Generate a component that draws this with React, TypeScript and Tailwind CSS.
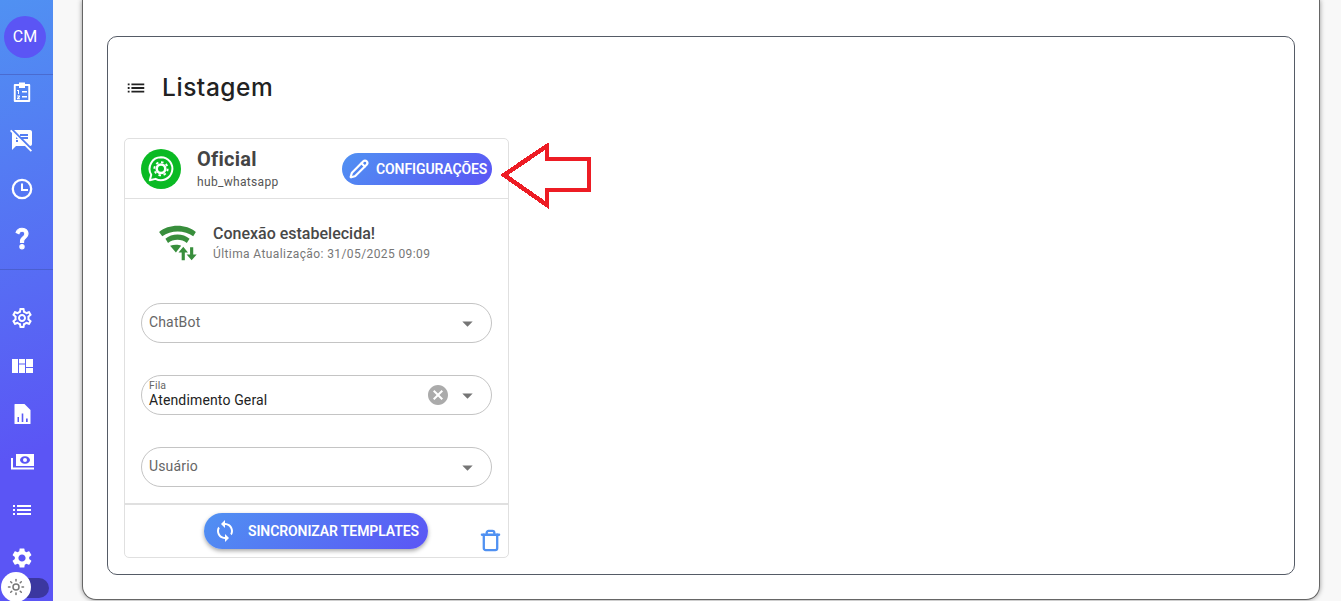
import { MdArrowDropDown, MdCancel, MdList, MdOutlineSettings, MdSettings, MdSpeakerNotesOff, MdSync } from "react-icons/md";
import { Pencil, Sun, Trash } from "lucide-react";

const gradient = "bg-[linear-gradient(135deg,#5091f2,#5b55f5)]";

function SelectField({ label, value }: { label: string; value?: string }) {
  return (
    <div className="relative flex h-10 items-center rounded-[20px] border border-[#c4c4c4] pl-[7px] pr-[11px] text-sm tracking-[0.15px]">
      {value ? (
        <div className="flex flex-col">
          <span className="text-[10.5px] leading-[10px] text-[#666]">{label}</span>
          <span className="leading-[18px] text-[#222]">{value}</span>
        </div>
      ) : (
        <span className="pb-[2px] text-[#666]">{label}</span>
      )}
      <div className="ml-auto flex items-center gap-[5px]">
        {value && <MdCancel className="text-[24px] text-[#ababab]" />}
        <MdArrowDropDown className="text-[25px] text-[#757575]" />
      </div>
    </div>
  );
}

function ClipboardIcon() {
  return (
    <svg viewBox="0 0 24 24" className="h-6 w-6" fill="white">
      <path fillRule="evenodd" d="M9 2.5h6V4h4.200a1 1 0 0 1 1 1v16a1 1 0 0 1-1 1H4.800a1 1 0 0 1-1-1V5a1 1 0 0 1 1-1H9zM5.700 6v14h12.600V6H15v2H9V6z" />
      <path d="M7 10h2v4H8v-3H7zM7 15.500h3V17l-1.500 1.200H10V19.300H7V18l1.800-1.500H7zM12 11h5v1.500h-5zM12 16h5v1.500h-5z" />
    </svg>
  );
}

function ClockIcon() {
  return (
    <svg viewBox="0 0 24 24" className="h-6 w-6" fill="none" stroke="white">
      <circle cx="12" cy="12" r="9.200" strokeWidth="2.300" />
      <path d="M12 6.500V13h6" strokeWidth="2" />
    </svg>
  );
}

function HelpIcon() {
  return (
    <svg viewBox="0 0 24 24" className="h-[26px] w-[26px]" fill="white" stroke="white" strokeWidth="1">
      <path d="M11.070 12.850c.77-1.390 2.250-2.210 3.110-3.440.91-1.290.4-3.700-2.180-3.700-1.690 0-2.520 1.280-2.870 2.340L6.540 6.960C7.250 4.830 9.180 3 11.990 3c2.350 0 3.960 1.070 4.780 2.410.7 1.150 1.110 3.300.03 4.900-1.200 1.770-2.350 2.310-2.970 3.450-.25.46-.35.76-.35 2.240h-2.890c-.01-.78-.13-2.050.48-3.150zM14 20c0 1.100-.9 2-2 2s-2-.9-2-2 .9-2 2-2 2 .9 2 2z" />
    </svg>
  );
}

function QuiltIcon() {
  return (
    <svg viewBox="0 0 24 24" className="h-6 w-6" fill="white">
      <rect x="2" y="5" width="6" height="14" />
      <rect x="9" y="5" width="6" height="4.500" />
      <rect x="9" y="10.500" width="6" height="8.500" />
      <rect x="16" y="5" width="7" height="8" />
      <rect x="16" y="14" width="7" height="5" />
    </svg>
  );
}

function FileChartIcon() {
  return (
    <svg viewBox="0 0 24 24" className="h-6 w-6" fill="white">
      <path fillRule="evenodd" d="M4.500 2.500a.5.5 0 0 1 .5-.5h9.500l6 6v13.500a.5.5 0 0 1-.5.5H5a.5.5 0 0 1-.5-.5zM7.500 15v5H9v-5zM11.700 11.500V20h1.600v-8.500zM16 16.500V20h1.700v-3.500z" />
    </svg>
  );
}

function MoneyIcon() {
  return (
    <svg viewBox="0 0 24 24" className="h-6 w-6" fill="white">
      <path fillRule="evenodd" d="M6 4h18v12H6zM15 6.200c-3 0-5 2-5 3.800s2 3.800 5 3.800 5-2 5-3.800-2-3.800-5-3.800z" />
      <circle cx="15" cy="10" r="2" />
      <path d="M1 8h2v9.500h21v2H1z" />
    </svg>
  );
}

function WifiSyncIcon() {
  return (
    <svg viewBox="0 0 40 40" className="h-[42px] w-[42px]" fill="#388e3c">
      <path d="M2 9.500C11 1.500 28 1.500 37 9.500l-2.500 4C26.500 7.500 13 7.500 5 13.500z" />
      <path d="M8 16C14 10.500 25 10.500 31 16l-2.600 4C23.500 16 15.500 16 10.500 20z" />
      <path d="M12.500 22.500c3.500-1 8-1 10.500 0L18 29z" />
      <path d="M25 23.500 29.500 29h-3v7.500h-3V29h-3z" />
      <path d="M31.500 24h3v7h3.300L33 36.500 28.200 31h3.300z" />
    </svg>
  );
}

function HubIcon() {
  return (
    <div className="flex h-10 w-10 shrink-0 items-center justify-center rounded-full bg-[#0bba24]">
      <svg viewBox="0 0 24 24" className="h-8 w-8" fill="none">
        <path d="M12 3.200a8.600 8.600 0 0 0-7.300 13.100L3.600 20.500l4.300-1.100A8.600 8.600 0 1 0 12 3.200z" stroke="white" strokeWidth="1.500" strokeLinejoin="round" />
        <circle cx="12" cy="11.800" r="3.200" stroke="white" strokeWidth="1.900" />
        <circle cx="12" cy="11.800" r="5" stroke="white" strokeWidth="1.400" strokeDasharray="1.900 2" />
      </svg>
    </div>
  );
}

export default function App() {
  return (
    <div className="flex h-[601px] overflow-hidden bg-[#f8f8f8] font-['Roboto',sans-serif] text-[#444]">
      <aside className="relative flex w-[53px] shrink-0 flex-col bg-[linear-gradient(160deg,#5091f2,#5b55f5_75%)] text-white">
        <div className="flex h-[75px] items-center justify-center border-b border-[#4a6bd0] pr-[3px]">
          <div className="flex h-[42px] w-[42px] items-center justify-center rounded-full bg-[#5b55f5] text-base">CM</div>
        </div>
        <div className="flex h-[195px] flex-col items-center gap-[24.3px] border-b border-[#4a5fd0] pr-[9px] pt-[5px]">
          <ClipboardIcon />
          <MdSpeakerNotesOff className="text-[24px]" />
          <ClockIcon />
          <HelpIcon />
        </div>
        <div className="flex flex-col items-center gap-6 pr-[9px] pt-9">
          <MdOutlineSettings className="text-[24px]" />
          <QuiltIcon />
          <FileChartIcon />
          <MoneyIcon />
          <MdList className="text-[24px]" />
          <MdSettings className="text-[24px]" />
        </div>
        <div className="absolute bottom-[3px] left-[14px] h-5 w-[35px] rounded-[10px] bg-[#3b37a0]" />
        <div className="absolute left-px top-[572px] flex h-[30px] w-[30px] items-center justify-center rounded-full bg-white">
          <Sun size={18} className="text-[#777]" />
        </div>
      </aside>

      <main className="ml-[29px] mr-[21px] h-[600px] flex-1 rounded-b-[14px] border-x border-b border-[#666] bg-white px-6 pt-9 shadow-[0_0_5px_rgba(0,0,0,0.4)]">
        <section className="h-[539px] rounded-[10px] border border-[#555b66] px-4">
          <div className="flex h-[101px] items-center gap-[15px] pl-px">
            <MdList className="text-[22px] text-[#222]" />
            <h1 className="font-['Inter',sans-serif] text-[24.500px] font-medium tracking-[0.55px] text-[#222]">Listagem</h1>
          </div>
          <div className="w-[385px] rounded-[5px] border border-[#e0e0e0]">
            <header className="flex h-[60px] items-center border-b border-[#e0e0e0] pl-4 pr-4">
              <HubIcon />
              <div className="ml-4">
                <div className="text-xl font-bold leading-6 tracking-[0.25px]">Oficial</div>
                <div className="mt-[3px] text-xs leading-4 tracking-[0.33px] text-[#555]">hub_whatsapp</div>
              </div>
              <button className={`ml-auto flex h-8 w-[150px] items-center gap-[7px] rounded-2xl pl-[7px] text-sm font-semibold tracking-[-0.1px] text-white ${gradient}`}>
                <Pencil size={20} strokeWidth={2.600} />
                CONFIGURAÇÕES
              </button>
            </header>
            <div className="flex flex-col px-4">
              <div className="flex h-[104px] items-center gap-[14px] pb-4 pl-4">
                <WifiSyncIcon />
                <div>
                  <div className="text-base font-medium leading-5 text-[#484848]">Conexão estabelecida!</div>
                  <div className="mt-[2px] text-xs leading-4 tracking-[0.4px] text-[#777]">Última Atualização: 31/05/2025 09:09</div>
                </div>
              </div>
              <div className="flex flex-col gap-8">
                <SelectField label="ChatBot" />
                <SelectField label="Fila" value="Atendimento Geral" />
                <SelectField label="Usuário" />
              </div>
            </div>
            <footer className="relative mt-4 flex h-[54px] justify-center border-t-2 border-[#e0e0e0] pr-[1px] pt-2">
              <button className={`flex h-9 w-[224px] items-center gap-[11px] rounded-[18px] pl-[9px] text-sm font-semibold tracking-[-0.1px] text-white shadow-[0_2px_4px_rgba(0,0,0,0.35)] ${gradient}`}>
                <MdSync className="text-[24px]" />
                SINCRONIZAR TEMPLATES
              </button>
              <Trash size={23} strokeWidth={2.400} className="absolute bottom-[5px] right-[6px] text-[#5091f2]" />
            </footer>
          </div>
        </section>
      </main>

      {/* seta vermelha de destaque */}
      <svg viewBox="0 0 92 66" className="absolute left-[501px] top-[143px] h-[66px] w-[92px]" fill="none" shapeRendering="crispEdges">
        <path d="M3 32 L46 3 V16 H88 V47 H46 V62 Z" stroke="#ed1c24" strokeWidth="4.500" />
      </svg>
    </div>
  );
}
